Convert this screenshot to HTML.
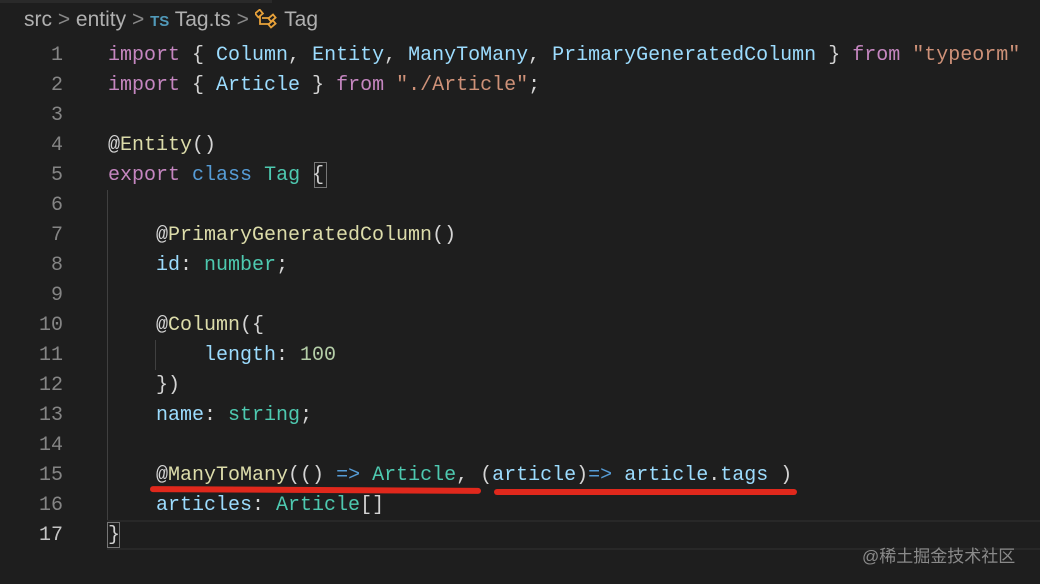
<!DOCTYPE html>
<html><head><meta charset="utf-8"><style>
body{margin:0;width:1040px;height:584px;background:#1e1e1e;overflow:hidden;position:relative;font-family:"Liberation Mono",monospace}
.bc{position:absolute;left:24px;top:8px;font:21px "Liberation Sans",sans-serif;color:#b0b0b0;white-space:pre}
.ln{position:absolute;left:0;width:63px;text-align:right;color:#858585;font-size:20px;line-height:30px}
.cd{position:absolute;left:108px;font-size:20px;line-height:30px;color:#d4d4d4;white-space:pre}
.k{color:#c586c0}.v{color:#9cdcfe}.s{color:#ce9178}.f{color:#dcdcaa}.b{color:#569cd6}.t{color:#4ec9b0}.n{color:#b5cea8}
.ul{position:absolute;height:6px;background:#e0281c;border-radius:3px}
</style></head><body>
<div style="position:absolute;left:0;top:0;width:272px;height:3px;background:#2a2a2a"></div>
<div class="bc">src <span style="color:#888">&gt;</span> entity <span style="color:#888">&gt;</span> <span style="color:#519aba;font-weight:bold;font-size:15px">TS</span> Tag.ts <span style="color:#888">&gt;</span> <svg width="24" height="20" viewBox="0 0 24 20" style="vertical-align:-3px"><g fill="none" stroke="#e8a23a" stroke-width="1.8"><rect x="1" y="2" width="6" height="5" transform="rotate(-40 4 4.5)"/><rect x="14" y="7" width="6" height="4" transform="rotate(-40 17 9)"/><rect x="14" y="13" width="6" height="4" transform="rotate(-40 17 15)"/><path d="M5 7v8h9M7 9h7"/></g></svg> Tag</div>
<div style="position:absolute;left:107px;top:520px;width:933px;height:30px;border-top:2px solid #282828;border-bottom:2px solid #282828;box-sizing:border-box"></div>
<div style="position:absolute;left:107px;top:190px;width:1px;height:330px;background:#404040"></div>
<div style="position:absolute;left:155px;top:340px;width:1px;height:30px;background:#404040"></div>
<div style="position:absolute;left:107px;top:522px;width:13px;height:26px;border:1px solid #777;box-sizing:border-box"></div>
<div style="position:absolute;left:314px;top:162px;width:13px;height:26px;border:1px solid #777;box-sizing:border-box"></div>
<div class="ln" style="top:41px">1<br>2<br>3<br>4<br>5<br>6<br>7<br>8<br>9<br>10<br>11<br>12<br>13<br>14<br>15<br>16<br><span style="color:#c6c6c6">17</span></div>
<div class="cd" style="top:41px"><span class="k">import</span> { <span class="v">Column</span>, <span class="v">Entity</span>, <span class="v">ManyToMany</span>, <span class="v">PrimaryGeneratedColumn</span> } <span class="k">from</span> <span class="s">"typeorm"</span>
<span class="k">import</span> { <span class="v">Article</span> } <span class="k">from</span> <span class="s">"./Article"</span>;

@<span class="f">Entity</span>()
<span class="k">export</span> <span class="b">class</span> <span class="t">Tag</span> {

    @<span class="f">PrimaryGeneratedColumn</span>()
    <span class="v">id</span>: <span class="t">number</span>;

    @<span class="f">Column</span>({
        <span class="v">length</span>: <span class="n">100</span>
    })
    <span class="v">name</span>: <span class="t">string</span>;

    @<span class="f">ManyToMany</span>(() <span class="b">=&gt;</span> <span class="t">Article</span>, (<span class="v">article</span>)<span class="b">=&gt;</span> <span class="v">article</span>.<span class="v">tags</span> )
    <span class="v">articles</span>: <span class="t">Article</span>[]
}</div>
<div class="ul" style="left:150px;top:487px;width:331px;transform:rotate(0.3deg)"></div>
<div class="ul" style="left:494px;top:489px;width:303px"></div>
<div style="position:absolute;left:862px;top:542px;font:17px 'Liberation Sans','Noto Sans CJK SC',sans-serif;color:#8a8a8a">@稀土掘金技术社区</div>
</body></html>
